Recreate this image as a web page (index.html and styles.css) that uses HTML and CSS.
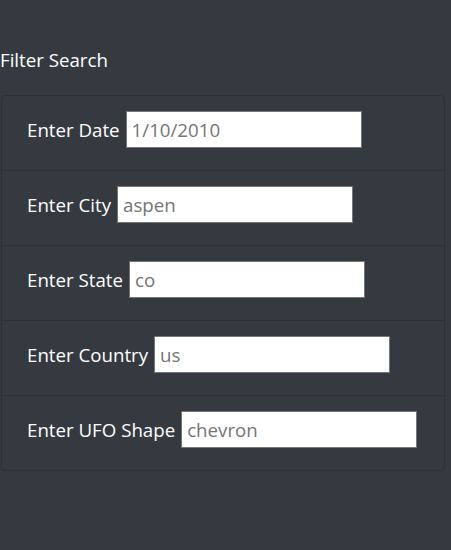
FILE: index.html
```html
<!DOCTYPE html>
<html>
<head>
<meta charset="utf-8">
<link rel="stylesheet" href="styles.css">
</head>
<body>
<div class="page">
  <h5 class="title">Filter Search</h5>
  <ul class="filters">
    <li class="filter"><label for="date">Enter Date</label><input id="date" type="text" placeholder="1/10/2010"></li>
    <li class="filter"><label for="city">Enter City</label><input id="city" type="text" placeholder="aspen"></li>
    <li class="filter"><label for="state">Enter State</label><input id="state" type="text" placeholder="co"></li>
    <li class="filter"><label for="country">Enter Country</label><input id="country" type="text" placeholder="us"></li>
    <li class="filter"><label for="shape">Enter UFO Shape</label><input id="shape" type="text" placeholder="chevron"></li>
  </ul>
</div>
</body>
</html>
```
FILE: styles.css
```css
html, body {
  margin: 0;
  padding: 0;
  background: #343a40;
  height: 100%;
}
body {
  font-family: "Open Sans", "Noto Sans", sans-serif;
  color: #ffffff;
  font-size: 18.7px;
}
.page {
  padding-top: 46px;
  width: 445px;
}
.title {
  margin: 0 0 22px 0;
  font-size: 18.7px;
  font-weight: 400;
  line-height: 27px;
}
.filters {
  list-style: none;
  margin: 0 0 0 1px;
  padding: 0;
  border: 1px solid rgba(0,0,0,0.15);
  border-radius: 4px;
}
.filter {
  display: flex;
  align-items: center;
  gap: 6px;
  padding: 15px 25px 22px 25px;
  border-top: 1px solid rgba(0,0,0,0.15);
}
.filter:first-child {
  border-top: none;
}
.filter label {
  white-space: nowrap;
  line-height: 27px;
}
.filter input {
  box-sizing: border-box;
  width: 236px;
  height: 37px;
  border: 1px solid #767676;
  border-radius: 0;
  padding: 0 5px;
  font-family: "Open Sans", "Noto Sans", sans-serif;
  font-size: 18.7px;
  background: #ffffff;
  outline: none;
}
.filter input::placeholder {
  color: #757575;
}
```
